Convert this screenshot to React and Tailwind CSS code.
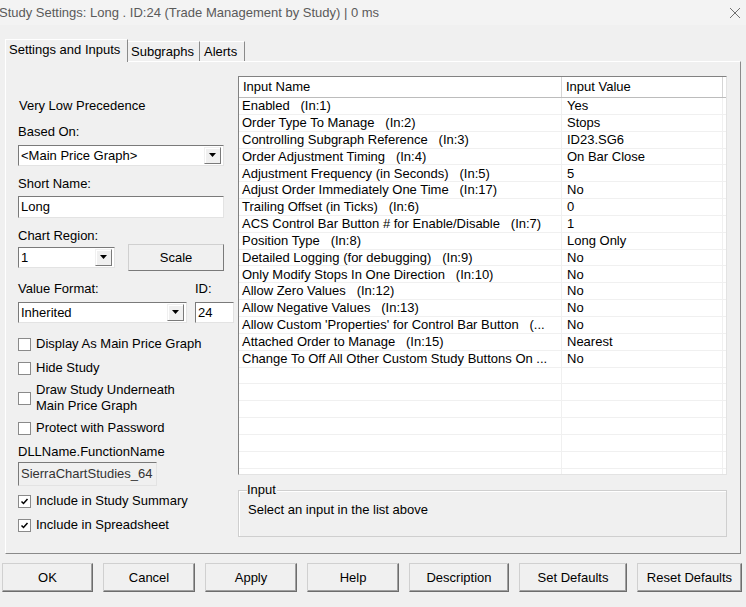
import React from 'react'

const rows = [
  ['Enabled   (In:1)', 'Yes'],
  ['Order Type To Manage   (In:2)', 'Stops'],
  ['Controlling Subgraph Reference   (In:3)', 'ID23.SG6'],
  ['Order Adjustment Timing   (In:4)', 'On Bar Close'],
  ['Adjustment Frequency (in Seconds)   (In:5)', '5'],
  ['Adjust Order Immediately One Time   (In:17)', 'No'],
  ['Trailing Offset (in Ticks)   (In:6)', '0'],
  ['ACS Control Bar Button # for Enable/Disable   (In:7)', '1'],
  ['Position Type   (In:8)', 'Long Only'],
  ['Detailed Logging (for debugging)   (In:9)', 'No'],
  ['Only Modify Stops In One Direction   (In:10)', 'No'],
  ['Allow Zero Values   (In:12)', 'No'],
  ['Allow Negative Values   (In:13)', 'No'],
  ["Allow Custom 'Properties' for Control Bar Button   (...", 'No'],
  ['Attached Order to Manage   (In:15)', 'Nearest'],
  ['Change To Off All Other Custom Study Buttons On ...', 'No'],
]

const buttons = [
  ['OK', 'w-[91px]'],
  ['Cancel', 'w-[92px]'],
  ['Apply', 'w-[92px]'],
  ['Help', 'w-[92px]'],
  ['Description', 'w-[100px]'],
  ['Set Defaults', 'w-[108px]'],
  ['Reset Defaults', 'w-[105px]'],
]

const Arrow = () => (
  <div className="w-[17px] h-full flex items-center justify-center bg-[#f0f0f0] border border-[#f0f0f0] border-r-[#7a7a7a] border-b-[#7a7a7a] shadow-[inset_1px_1px_0_#ffffff]">
    <svg width="8" height="5" viewBox="0 0 8 5">
      <path d="M0 0h7L3.5 4z" fill="#000" />
    </svg>
  </div>
)

const Combo = ({ value, className }) => (
  <div className={`flex items-center bg-white border border-[#7a7a7a] border-r-[#e3e3e3] border-b-[#e3e3e3] pl-[2px] pr-[2px] py-[1px] ${className}`}>
    <span className="flex-1 truncate">{value}</span>
    <div className="h-[17px]">
      <Arrow />
    </div>
  </div>
)

const TextBox = ({ value, className }) => (
  <div className={`flex items-center bg-white border border-[#7a7a7a] border-r-[#e3e3e3] border-b-[#e3e3e3] px-[2px] ${className}`}>
    {value}
  </div>
)

const CheckBox = ({ checked }) => (
  <div className="w-[13px] h-[13px] shrink-0 bg-white border border-[#8a8a8a] flex items-center justify-center">
    {checked && (
      <svg width="9" height="9" viewBox="0 0 9 9">
        <path d="M1.5 4.5l2 2L7.5 2" fill="none" stroke="#000" strokeWidth="1.5" />
      </svg>
    )}
  </div>
)

const Check = ({ label, checked, className }) => (
  <div className={`flex items-center gap-[5px] ${className}`}>
    <CheckBox checked={checked} />
    <span className="leading-[16px]">{label}</span>
  </div>
)

const App = () => {
  return (
    <div
      className="w-[746px] h-[607px] bg-[#f0f0f0] text-[13px] text-black overflow-hidden flex flex-col"
      style={{ fontFamily: '"Liberation Sans", Arial, sans-serif' }}
    >
      {/* Title bar */}
      <div className="h-[25px] shrink-0 bg-[#f3f3f3] flex items-center justify-between pr-[5px]">
        <span className="ml-[-1px] text-[#5a5a5a] text-[13px]">Study Settings: Long . ID:24 (Trade Management by Study) | 0 ms</span>
        <svg width="12" height="12" viewBox="0 0 12 12">
          <path d="M1 1l10 10M11 1L1 11" stroke="#707070" strokeWidth="1" />
        </svg>
      </div>

      {/* Tabs */}
      <div className="mt-[14px] ml-[5px] flex items-end h-[23px] relative z-10">
        <div className="w-[123px] h-[23px] bg-[#f0f0f0] border-l border-t border-[#ffffff] border-r border-r-[#8a8a8a] flex items-center pl-[3px] pb-[2px]">
          Settings and Inputs
        </div>
        <div className="w-[72px] h-[20px] mb-[1px] border-t border-[#ffffff] border-r border-r-[#8a8a8a] flex items-center pl-[3px]">
          Subgraphs
        </div>
        <div className="w-[45px] h-[20px] mb-[1px] border-t border-[#ffffff] border-r border-r-[#8a8a8a] flex items-center pl-[4px]">
          Alerts
        </div>
      </div>

      {/* Panel */}
      <div className="ml-[5px] mt-[-1px] w-[736px] h-[493px] border border-[#ffffff] border-r-[#8a8a8a] border-b-[#8a8a8a] flex">
        {/* Left column */}
        <div className="w-[220px] ml-[12px] flex flex-col">
          <div className="mt-[36px] ml-[1px] leading-[16px]">Very Low Precedence</div>
          <div className="mt-[10px] leading-[16px]">Based On:</div>
          <Combo value="<Main Price Graph>" className="mt-[5px] w-[206px] h-[21px]" />
          <div className="mt-[10px] leading-[16px]">Short Name:</div>
          <TextBox value="Long" className="mt-[4px] w-[206px] h-[22px]" />
          <div className="mt-[10px] leading-[16px]">Chart Region:</div>
          <div className="mt-[0px] flex items-center h-[27px]">
            <Combo value="1" className="w-[97px] h-[21px]" />
            <button className="ml-[13px] w-[96px] h-[27px] bg-[#f0f0f0] border border-[#d0d0d0] border-r-[#7a7a7a] border-b-[#7a7a7a]">
              Scale
            </button>
          </div>
          <div className="mt-[10px] flex leading-[16px]">
            <span className="w-[177px]">Value Format:</span>
            <span>ID:</span>
          </div>
          <div className="mt-[5px] flex items-center">
            <Combo value="Inherited" className="w-[169px] h-[21px]" />
            <TextBox value="24" className="ml-[8px] w-[39px] h-[21px]" />
          </div>
          <Check label="Display As Main Price Graph" className="mt-[13px]" />
          <Check label="Hide Study" className="mt-[8px]" />
          <div className="mt-[6px] flex items-center gap-[5px]">
            <CheckBox />
            <div className="leading-[16px]">
              <div>Draw Study Underneath</div>
              <div>Main Price Graph</div>
            </div>
          </div>
          <Check label="Protect with Password" className="mt-[6px]" />
          <div className="mt-[8px] leading-[16px]">DLLName.FunctionName</div>
          <div className="mt-[2px] w-[139px] h-[24px] flex items-center px-[2px] bg-[#f0f0f0] border border-[#7a7a7a] border-r-[#e3e3e3] border-b-[#e3e3e3] text-[#333]">
            SierraChartStudies_64
          </div>
          <Check label="Include in Study Summary" checked className="mt-[7px]" />
          <Check label="Include in Spreadsheet" checked className="mt-[8px]" />
        </div>

        {/* Right column */}
        <div className="w-[489px] flex flex-col">
          <div className="mt-[14px] h-[399px] bg-white border border-[#828282] border-r-[#e3e3e3] border-b-[#e3e3e3] overflow-hidden">
            <div className="flex h-[21px] border-b border-[#bcbcbc] bg-white">
              <div className="w-[323px] pl-[4px] flex items-center border-r border-[#d5d5d5]">Input Name</div>
              <div className="w-[161px] pl-[4px] flex items-center border-r border-[#d5d5d5]">Input Value</div>
            </div>
            {rows.map(([name, value], i) => (
              <div key={i} className="flex h-[16.85px] border-b border-[#f0f0f0]">
                <div className="w-[323px] pl-[3px] flex items-center whitespace-pre border-r border-[#f0f0f0] truncate">{name}</div>
                <div className="w-[161px] pl-[5px] flex items-center border-r border-[#f0f0f0]">{value}</div>
              </div>
            ))}
            {[0, 1, 2, 3, 4, 5, 6].map((i) => (
              <div key={'e' + i} className="flex h-[16.85px] border-b border-[#f0f0f0]">
                <div className="w-[323px] border-r border-[#f0f0f0]" />
                <div className="w-[161px] border-r border-[#f0f0f0]" />
              </div>
            ))}
          </div>

          {/* Input group box */}
          <div className="mt-[15px] relative h-[47px] w-[489px] border border-[#cfcfcf] shadow-[inset_1px_1px_0_#ffffff]">
            <span className="absolute left-[8px] top-[-9px] bg-[#f0f0f0] pr-[1px] leading-[16px]">Input</span>
            <div className="mt-[11px] ml-[9px] leading-[16px]">Select an input in the list above</div>
          </div>
        </div>
      </div>

      {/* Bottom buttons */}
      <div className="mt-[9px] ml-[2px] flex gap-[10px]">
        {buttons.map(([label, w]) => (
          <button
            key={label}
            className={`${w} h-[29px] bg-[#f0f0f0] border border-[#d0d0d0] border-r-[#6d6d6d] border-b-[#6d6d6d] shadow-[inset_-1px_-1px_0_#a0a0a0]`}
          >
            {label}
          </button>
        ))}
      </div>
    </div>
  )
}

export default App
